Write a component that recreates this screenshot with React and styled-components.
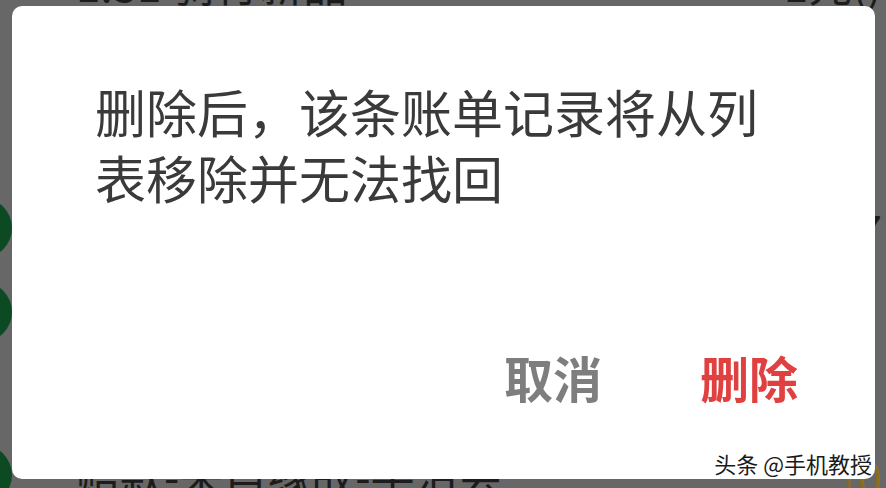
import styled, { createGlobalStyle } from 'styled-components';

const GlobalStyle = createGlobalStyle`
  html, body {
    margin: 0;
    padding: 0;
    background: #676767;
  }
  body {
    font-family: "Noto Sans CJK SC", "Noto Sans", sans-serif;
  }
`;

const Screen = styled.div`
  position: relative;
  width: 886px;
  height: 488px;
  overflow: hidden;
  background: #676767;
`;

/* dimmed list behind the dialog */
const Backdrop = styled.div`
  display: flex;
  flex-direction: column;
  margin-top: -40px;
`;

const ListRow = styled.div`
  display: flex;
  align-items: center;
  gap: 64px;
  height: ${(p) => p.$h}px;
  margin-top: ${(p) => p.$gap || 0}px;
`;

const RowIcon = styled.div`
  flex: none;
  width: 60px;
  height: 60px;
  margin-left: -48px;
  border-radius: 50%;
  background: ${(p) => (p.$hidden ? 'transparent' : '#0c4a24')};
`;

const RowText = styled.div`
  flex: 1;
  font-size: 44px;
  color: #1c1c1c;
  white-space: nowrap;
`;

const RowAmount = styled.div`
  flex: none;
  margin-right: 4px;
  font-size: 44px;
  color: ${(p) => p.$color || '#1c1c1c'};
  white-space: nowrap;
`;

const Dialog = styled.div`
  position: absolute;
  left: 12px;
  top: 6px;
  width: 863px;
  height: 473px;
  box-sizing: border-box;
  padding: 72px 77px 0 83px;
  display: flex;
  flex-direction: column;
  background: #ffffff;
  border-radius: 10px;
`;

const Message = styled.p`
  margin: 0;
  width: 680px;
  font-size: 51px;
  line-height: 66px;
  color: #3a3a3a;
  font-weight: 400;
`;

const Actions = styled.div`
  display: flex;
  justify-content: flex-end;
  gap: 98px;
  margin-top: 142px;
`;

const ActionButton = styled.button`
  border: none;
  background: none;
  padding: 0;
  font-family: inherit;
  font-size: 49px;
  line-height: 50px;
  font-weight: 700;
  color: ${(p) => (p.$danger ? '#e0403f' : '#7e7e7e')};
  cursor: pointer;
`;

const Watermark = styled.div`
  position: absolute;
  right: 14px;
  bottom: 12px;
  font-size: 22px;
  line-height: 26px;
  color: #1a1a1a;
  text-shadow: 0 0 2px #fff, 0 0 2px #fff, 0 0 3px #fff;
  white-space: nowrap;
`;

const App = () => {
  return (
    <Screen>
      <GlobalStyle />
      <Backdrop>
        <ListRow $h={46}>
          <RowIcon $hidden />
          <RowText>1.31 骑行新品</RowText>
          <RowAmount>-1元()</RowAmount>
        </ListRow>
        <ListRow $h={90} $gap={177}>
          <RowIcon />
          <RowText />
          <RowAmount>-7</RowAmount>
        </ListRow>
        <ListRow $h={78}>
          <RowIcon />
          <RowText />
        </ListRow>
        <ListRow $h={80} $gap={84}>
          <RowIcon />
          <RowText>赔款-来自缘故-手沿会</RowText>
          <RowAmount $color="#8a6d1e">(0</RowAmount>
        </ListRow>
      </Backdrop>
      <Dialog>
        <Message>删除后，该条账单记录将从列表移除并无法找回</Message>
        <Actions>
          <ActionButton>取消</ActionButton>
          <ActionButton $danger>删除</ActionButton>
        </Actions>
      </Dialog>
      <Watermark>头条 @手机教授</Watermark>
    </Screen>
  );
};

export default App;
